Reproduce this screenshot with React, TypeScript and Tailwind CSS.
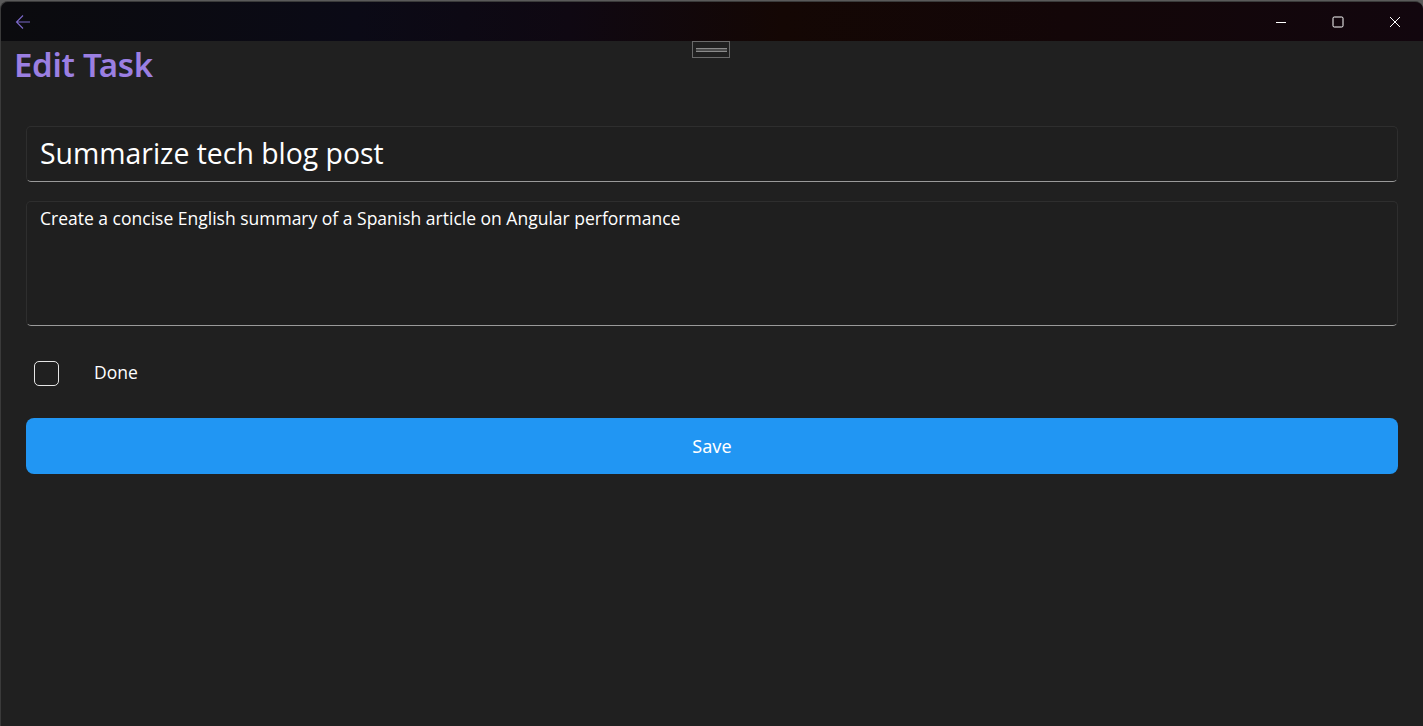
import React from "react";

export default function App() {
  return (
    <div className="w-[1423px] h-[726px] bg-[#5a5a5a] overflow-hidden relative" style={{ fontFamily: '"Open Sans", "Noto Sans", sans-serif' }}>
      <div className="absolute left-0 top-[1px] w-[1423px] h-[725px] rounded-t-[8px] overflow-hidden border-l border-t border-[#3a3a3a] bg-[#202020] flex flex-col">
        {/* Title bar */}
        <div className="h-[39px] shrink-0 flex items-center bg-[linear-gradient(90deg,#0b0b0e_0%,#0b0a16_25%,#0f0812_40%,#140704_55%,#130608_75%,#12060e_100%)]">
          <div className="w-[44px] h-[39px] flex items-center justify-center">
            <svg width="16" height="16" viewBox="0 0 16 16" fill="none" stroke="#7b68c8" strokeWidth="1.1">
              <path d="M15 8H1.5M8 1.5L1.5 8L8 14.5" />
            </svg>
          </div>
          <div className="flex-1" />
          <div className="w-[57px] h-[39px] flex items-center justify-center">
            <svg width="12" height="12" viewBox="0 0 12 12"><path d="M1 6.5H11" stroke="#fff" strokeWidth="1" /></svg>
          </div>
          <div className="w-[57px] h-[39px] flex items-center justify-center">
            <svg width="12" height="12" viewBox="0 0 12 12" fill="none"><rect x="1" y="1" width="10" height="10" rx="1.2" stroke="#fff" strokeWidth="1" /></svg>
          </div>
          <div className="w-[57px] h-[39px] flex items-center justify-center">
            <svg width="12" height="12" viewBox="0 0 12 12" fill="none"><path d="M1 1L11 11M11 1L1 11" stroke="#fff" strokeWidth="1" /></svg>
          </div>
        </div>

        {/* Drag handle */}
        <div className="absolute left-[691px] top-[39px] w-[38px] h-[17px] border border-[#6a6a6a] flex items-center justify-center">
          <div className="w-[31px] h-[4px] border-t border-b border-[#8a8a8a] bg-[#4a4a4a]" />
        </div>

        {/* Content */}
        <div className="flex flex-col">
          <h1 className="pl-[13px] pt-[2px] h-[56px] text-[33px] leading-[44px] font-semibold text-[#9b7fe2] tracking-[-0.3px]" style={{ fontFamily: '"Noto Sans", "Open Sans", sans-serif' }}>
            Edit Task
          </h1>
          <div className="px-[25px] pt-[29px] flex flex-col">
            <div className="h-[56px] rounded-[5px] border border-[#2e2e2e] border-b-[#9a9a9a] bg-[#1f1f1f] flex items-center px-[13px]">
              <span className="text-[28.4px] text-white leading-none pb-[2px]">Summarize tech blog post</span>
            </div>
            <div className="mt-[19px] h-[125px] rounded-[5px] border border-[#2e2e2e] border-b-[#9a9a9a] bg-[#1f1f1f] px-[13px] pt-[4px]">
              <span className="text-[17.5px] text-white leading-[24px]">Create a concise English summary of a Spanish article on Angular performance</span>
            </div>
            <div className="mt-[35px] h-[24px] flex items-center pl-[8px]">
              <div className="w-[25px] h-[25px] rounded-[5px] border-[1.5px] border-[#e6e6e6]" />
              <span className="ml-[35px] text-[17.5px] text-white pb-[1px]">Done</span>
            </div>
            <button className="mt-[33px] h-[56px] rounded-[8px] bg-[#2196f3] text-white text-[18px] flex items-center justify-center" style={{ fontFamily: '"Noto Sans", "Open Sans", sans-serif' }}>
              Save
            </button>
          </div>
        </div>
      </div>
    </div>
  );
}
